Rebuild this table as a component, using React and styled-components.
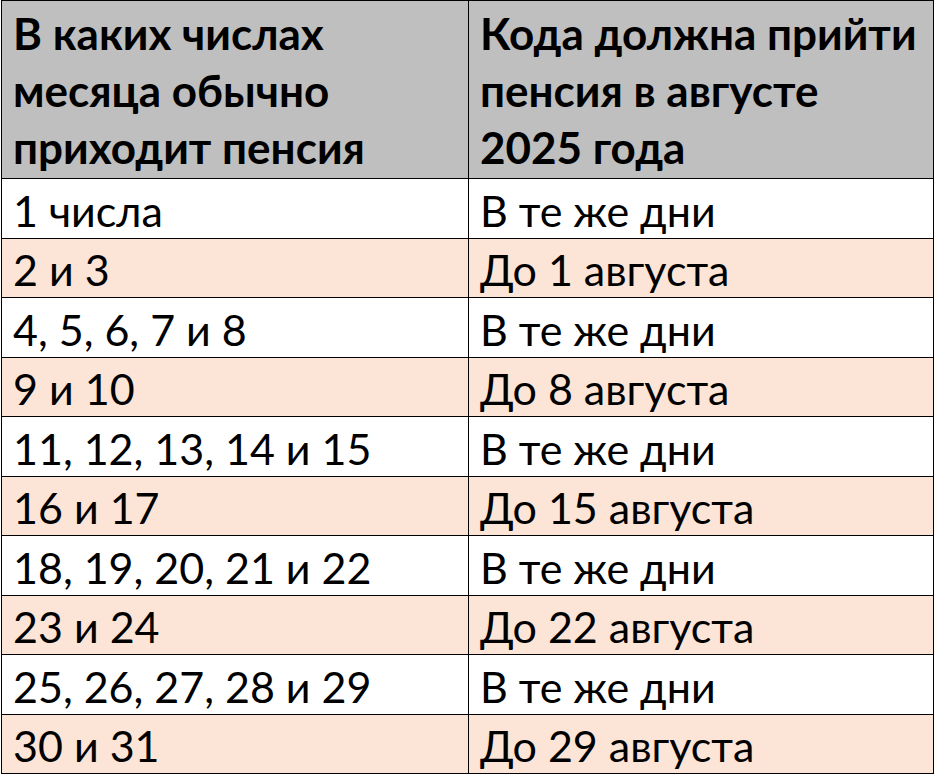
import React from "react";
import styled, { createGlobalStyle } from "styled-components";

const rows = [
  ["1 числа", "В те же дни"],
  ["2 и 3", "До 1 августа"],
  ["4, 5, 6, 7 и 8", "В те же дни"],
  ["9 и 10", "До 8 августа"],
  ["11, 12, 13, 14 и 15", "В те же дни"],
  ["16 и 17", "До 15 августа"],
  ["18, 19, 20, 21 и 22", "В те же дни"],
  ["23 и 24", "До 22 августа"],
  ["25, 26, 27, 28 и 29", "В те же дни"],
  ["30 и 31", "До 29 августа"],
];

export default function App() {
  return (
    <>
      <GlobalStyle />
      <StyledTable>
        <StyledHeadCell>
          В каких числах
          <br />
          месяца обычно
          <br />
          приходит пенсия
        </StyledHeadCell>
        <StyledHeadCell>
          Кода должна прийти
          <br />
          пенсия в августе
          <br />
          2025 года
        </StyledHeadCell>
        {rows.map(([day, date], i) => (
          <React.Fragment key={day}>
            <StyledCell shaded={i % 2 === 1}>{day}</StyledCell>
            <StyledCell shaded={i % 2 === 1}>{date}</StyledCell>
          </React.Fragment>
        ))}
      </StyledTable>
    </>
  );
}

const GlobalStyle = createGlobalStyle`
  body {
    margin: 0;
    background: #ffffff;
    font-family: Lato, "Liberation Sans", sans-serif;
  }
`;

const StyledTable = styled.div`
  display: grid;
  grid-template-columns: 466px 464px;
  grid-template-rows: 177px repeat(10, 1fr);
  gap: 1px;
  padding: 1px;
  margin-left: 1px;
  width: max-content;
  height: 774px;
  box-sizing: border-box;
  background: #000000;
`;

const StyledHeadCell = styled.div`
  background: #bfbfbf;
  color: #000000;
  font-weight: 700;
  font-size: 44px;
  line-height: 57px;
  padding: 2px 11px 0 11px;
  display: flex;
  align-items: center;
  white-space: nowrap;
`;

const StyledCell = styled.div`
  background: ${(p) => (p.shaded ? "#fce4d6" : "#ffffff")};
  color: #000000;
  font-size: 43px;
  padding: 4px 11px 0 11px;
  display: flex;
  align-items: center;
  white-space: nowrap;
`;
